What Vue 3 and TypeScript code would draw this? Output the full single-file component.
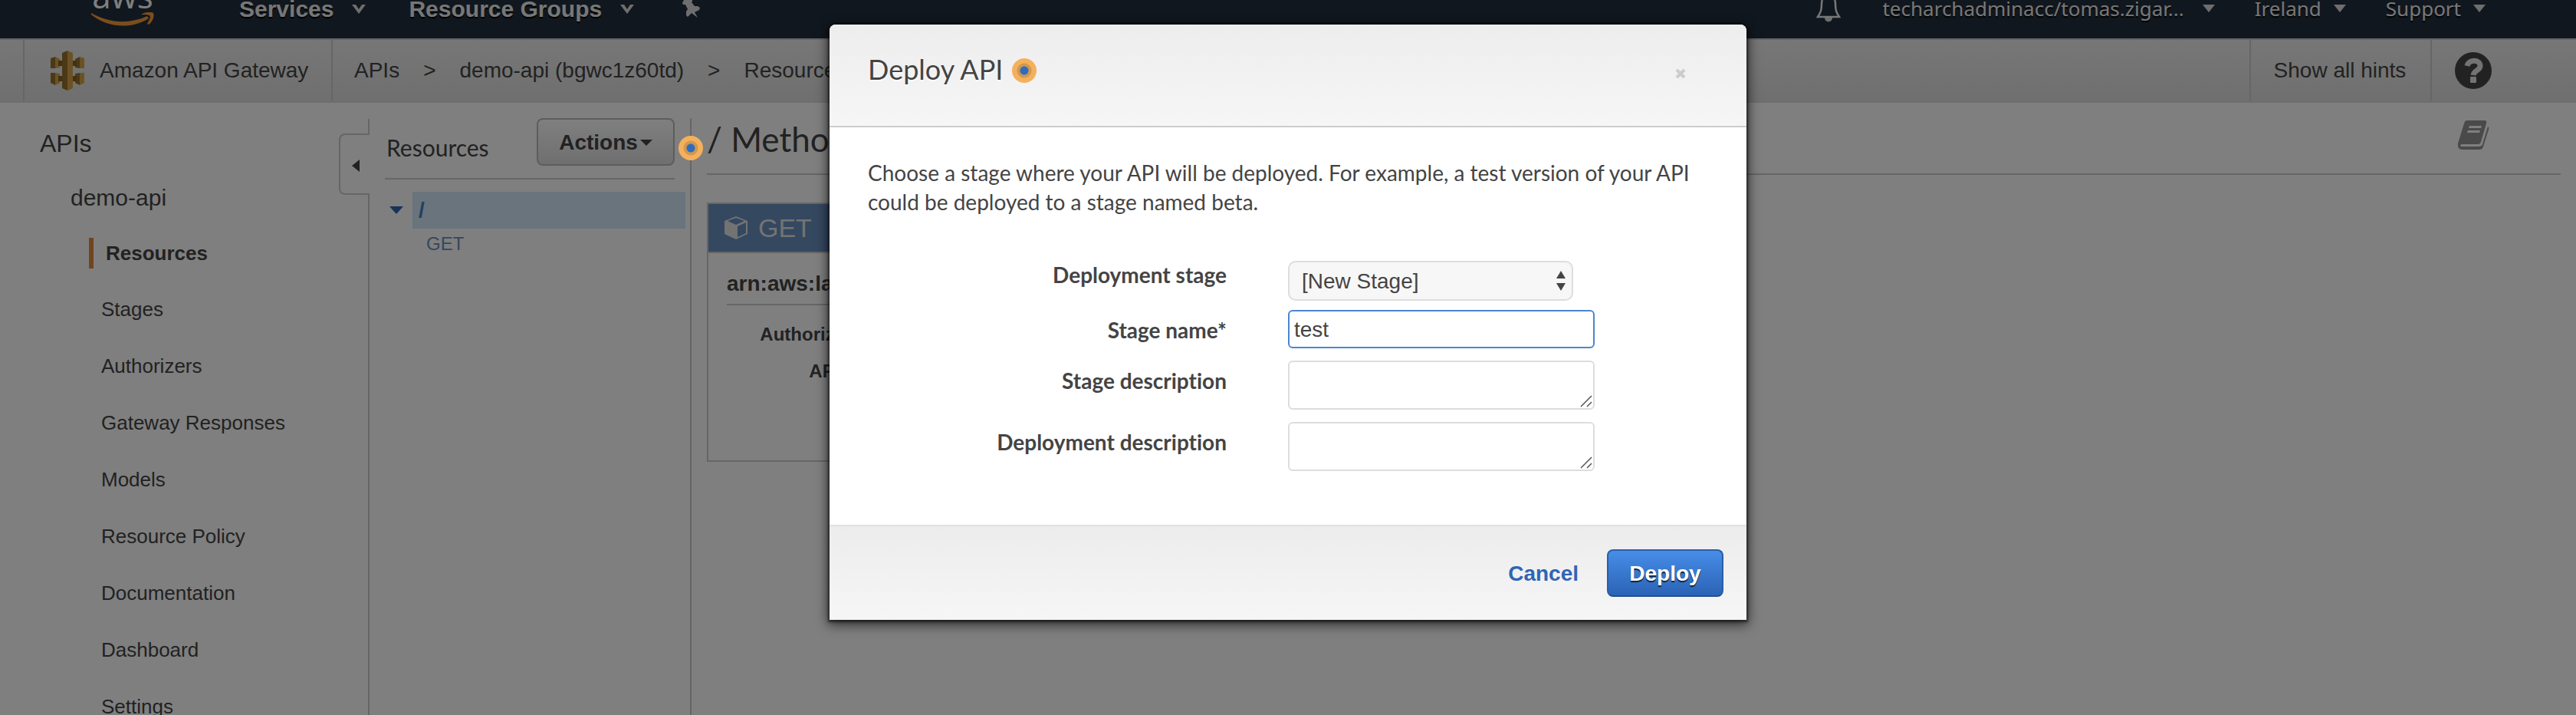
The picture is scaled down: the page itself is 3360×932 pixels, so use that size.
<script setup lang="ts">
import { ref } from 'vue'

const sections = ['Resources', 'Stages', 'Authorizers', 'Gateway Responses', 'Models', 'Resource Policy', 'Documentation', 'Dashboard', 'Settings']
const active = 'Resources'
const stage = ref('new')
const stageName = ref('test')
const stageDescription = ref('')
const deploymentDescription = ref('')
</script>

<template>
  <div class="page">
    <header class="nav">
      <a href="#" class="aws" aria-label="aws">
        <span class="aws-word">aws</span>
        <svg class="smile" width="84" height="20" viewBox="0 0 84 20"><path d="M1 1C24 14 50 16 74 5L76 8C56 21 24 22 1 3Z" /><path d="M66 3C72-1 80-1 82 1C84 5 81 12 76 16L74 15C77 10 79 6 77 4C75 3 70 3 66 3Z" /></svg>
      </a>
      <button class="nav-item bold services">Services
        <svg width="18" height="12" viewBox="0 0 18 12"><path d="M0 0H5L9 6L13 0H18L9 12Z" /></svg>
      </button>
      <button class="nav-item bold groups">Resource Groups
        <svg width="18" height="12" viewBox="0 0 18 12"><path d="M0 0H5L9 6L13 0H18L9 12Z" /></svg>
      </button>
      <button class="nav-item pin" aria-label="Pin">
        <svg width="24" height="24" viewBox="0 0 24 24"><path d="M0 4L2 0H13V2L12 3L16 8H20L23 10L22 13L16 16L20 23L12 17L7 22L5 20V15L7 12L4 6H1Z" /></svg>
      </button>
      <span class="grow"></span>
      <button class="nav-item bell" aria-label="Notifications">
        <svg width="32" height="38" viewBox="0 0 32 38"><path d="M16 3C10 3 7 8 7 14C7 22 6 25 2 31H30C26 25 25 22 25 14C25 8 22 3 16 3Z" fill="none" stroke="#f0f0f0" stroke-width="2.5" /><path d="M11 32C11 39 21 39 21 32Z" /></svg>
      </button>
      <button class="nav-item thin account">techarchadminacc/tomas.zigar...
        <svg width="16" height="10" viewBox="0 0 16 10"><path d="M0 0H16L8 10Z" /></svg>
      </button>
      <button class="nav-item thin region">Ireland
        <svg width="16" height="10" viewBox="0 0 16 10"><path d="M0 0H16L8 10Z" /></svg>
      </button>
      <button class="nav-item thin region">Support
        <svg width="16" height="10" viewBox="0 0 16 10"><path d="M0 0H16L8 10Z" /></svg>
      </button>
    </header>

    <div class="crumbs">
      <a href="#" class="service">
        <svg width="44" height="52" viewBox="0 0 44 52">
          <path d="M0 10L6 8V23H0ZM0 29H6V45L0 42ZM38 8L32 11V22L38 23ZM38 29L32 30V42L38 45Z" fill="#97702c" />
          <path d="M6 8L12 11V22L6 23ZM6 29L12 30V42L6 45ZM38 8L44 10V23H38ZM38 29H44V42L38 45Z" fill="#d6a448" />
          <path d="M10 13H34V20H10ZM10 33H34V40H10Z" fill="#86611f" />
          <path d="M22 0L15 3V49L22 52Z" fill="#97702c" />
          <path d="M22 0L29 3V49L22 52Z" fill="#d6a448" />
        </svg>
        Amazon API Gateway
      </a>
      <nav class="trail">
        <a href="#">APIs</a><span>&gt;</span><a href="#">demo-api (bgwc1z60td)</a><span>&gt;</span><a href="#">Resources</a>
      </nav>
      <button class="hints">Show all hints</button>
      <button class="help" aria-label="Help">
        <svg width="48" height="48" viewBox="0 0 48 48"><circle cx="24" cy="24" r="24" fill="#444" /><path d="M16 18C18 9 33 9 33 18C33 24 25 23 24 30" fill="none" stroke="#e6e6e6" stroke-width="7" /><rect x="20" y="32" width="8" height="8" rx="1" fill="#e6e6e6" /></svg>
      </button>
    </div>

    <div class="main">
      <aside class="side">
        <h2>APIs</h2>
        <h3>demo-api</h3>
        <ul>
          <li v-for="s in sections" :key="s" :class="{ active: s === active }"><a href="#">{{ s }}</a></li>
        </ul>
      </aside>
      <div class="rail">
        <span class="rail-top"></span>
        <button class="collapse" aria-label="Collapse">
          <svg width="10" height="16" viewBox="0 0 10 16"><path d="M10 0V16L0 8Z" fill="#444" /></svg>
        </button>
        <span class="rail-line"></span>
      </div>

      <section class="tree">
        <div class="tree-head">
          <h2>Resources</h2>
          <button class="actions">Actions<svg width="16" height="8" viewBox="0 0 16 8"><path d="M0 0H16L8 8Z" fill="#444" /></svg></button>
        </div>
        <div class="root">
          <svg width="18" height="10" viewBox="0 0 18 10"><path d="M0 0H18L9 10Z" fill="#2e66b4" /></svg>
          <a href="#">/</a>
        </div>
        <a href="#" class="leaf">GET</a>
        <span class="dot tree-dot"></span>
      </section>

      <section class="detail">
        <div class="detail-head">
          <h1>/ Method Execution</h1>
          <button class="book" aria-label="Documentation">
            <svg width="42" height="38" viewBox="0 0 42 38"><path fill-rule="evenodd" d="M13 0H36Q39 0 38 4L31 28Q30 31 27 31H6Q3 32 5 34H28Q32 34 33 31L40 8Q42 9 41 12L34 34Q33 38 29 38H6Q0 37 1 30L9 4Q10 0 13 0ZM16 7L15 10H31L32 7ZM14 13L13 16H29L30 13Z" fill="#959595" /></svg>
          </button>
        </div>
        <article class="card">
          <h2>
            <svg width="30" height="30" viewBox="0 0 30 30"><path d="M15 0L30 6V23L15 30L0 23V6Z" fill="#e6e6e6" /><path d="M15 2L26 6L15 11L4 6ZM17 13L28 8V22L17 27Z" fill="#6890c0" /></svg>
            GET
          </h2>
          <div class="card-body">
            <h3>arn:aws:lambda</h3>
            <p>Authorization</p>
            <p>API Key</p>
          </div>
        </article>
      </section>
    </div>

    <div class="overlay">
      <form class="modal" role="dialog" aria-labelledby="title" @submit.prevent>
        <header class="modal-head">
          <h2 id="title">Deploy API</h2>
          <span class="dot"></span>
          <button type="button" class="close" aria-label="Close"><svg width="14" height="14" viewBox="0 0 14 14"><path d="M2 2L12 12M12 2L2 12" stroke="#ccc" stroke-width="4" /></svg></button>
        </header>
        <div class="modal-body">
          <p>Choose a stage where your API will be deployed. For example, a test version of your API could be deployed to a stage named beta.</p>
          <div class="fields">
            <label for="stage" class="first">Deployment stage</label>
            <div class="select-wrap">
              <select id="stage" v-model="stage"><option value="new">[New Stage]</option></select>
              <svg width="14" height="26" viewBox="0 0 14 26"><path d="M7 0L13 10H1ZM1 16H13L7 26Z" fill="#444" /></svg>
            </div>
            <label for="name">Stage name*</label>
            <input id="name" v-model="stageName" type="text" />
            <label for="sdesc">Stage description</label>
            <div class="area">
              <textarea id="sdesc" v-model="stageDescription"></textarea>
              <svg width="16" height="16" viewBox="0 0 16 16"><path d="M1 15L15 1M9 15L15 9" stroke="#555" stroke-width="1.5" /></svg>
            </div>
            <label for="ddesc">Deployment description</label>
            <div class="area">
              <textarea id="ddesc" v-model="deploymentDescription"></textarea>
              <svg width="16" height="16" viewBox="0 0 16 16"><path d="M1 15L15 1M9 15L15 9" stroke="#555" stroke-width="1.5" /></svg>
            </div>
          </div>
        </div>
        <footer class="modal-foot">
          <button type="button" class="cancel">Cancel</button>
          <button type="submit" class="deploy">Deploy</button>
        </footer>
      </form>
    </div>
  </div>
</template>

<style>
body { margin: 0; }
</style>

<style scoped>
* { box-sizing: border-box; }
h1, h2, h3, p, ul { margin: 0; padding: 0; font-weight: 400; }
ul { list-style: none; }
a { color: inherit; text-decoration: none; }
button { font: inherit; color: inherit; background: none; border: 0; padding: 0; margin: 0; }
svg { display: block; flex: none; }
.page {
  position: relative;
  display: flex;
  flex-direction: column;
  height: 100vh;
  overflow: hidden;
  background: #fff;
  color: #444;
  font: 28px/36px "Liberation Sans", Arial, sans-serif;
}
.grow { flex: 1; }

.nav { display: flex; align-items: flex-start; height: 50px; flex: none; background: #232f3e; color: #eee; padding: 0 118px; overflow: hidden; }
.nav svg { fill: #ddd; }
.aws { display: flex; flex-direction: column; align-items: center; width: 84px; margin-top: -28px; }
.aws-word { font: 44px/44px "Open Sans", sans-serif; color: #fff; }
.nav .smile { fill: #f79a3a; }
.nav-item { display: flex; align-items: center; white-space: nowrap; text-shadow: 0 2px 1px #000; }
.bold { font-weight: 700; font-size: 30px; line-height: 36px; margin-top: -6px; gap: 24px; }
.services { margin-left: 110px; }
.groups { margin-left: 56px; }
.pin { margin-left: 63px; }
.bell { margin-top: -9px; }
.thin { font: 26px/36px "Noto Sans", sans-serif; gap: 24px; margin-top: -7px; }
.account { margin-left: 54px; }
.region { margin-left: 52px; gap: 16px; }

.crumbs { display: flex; height: 84px; flex: none; border-top: 2px solid #ccc; border-bottom: 2px solid #ddd; background: linear-gradient(#eee, #dfdfdf); padding-left: 30px; }
.service { display: flex; align-items: center; gap: 20px; width: 404px; padding-left: 34px; border: solid #ccc; border-width: 0 2px; }
.trail { display: flex; align-items: center; flex: 1; gap: 31px; padding-left: 28px; }
.hints { width: 236px; border-left: 2px solid #ccc; padding-right: 2px; }
.help { display: flex; align-items: center; width: 190px; padding-left: 30px; border-left: 2px solid #ccc; }

.main { display: flex; flex: 1; min-height: 0; }
.side { width: 442px; padding: 34px 0 0 52px; flex: none; }
.side h2 { font-size: 32px; line-height: 38px; }
.side h3 { font-size: 30px; line-height: 36px; margin: 34px 0 0 40px; }
.side ul { margin-top: 18px; }
.side li { display: flex; align-items: center; height: 74px; padding-left: 80px; font-size: 26px; line-height: 40px; }
.side li.active { height: 72px; padding-left: 64px; font-weight: 700; }
.side li.active a { border-left: 6px solid #e08a3a; padding-left: 16px; }
.rail { width: 40px; flex: none; display: flex; flex-direction: column; padding-top: 21px; }
.rail-top { height: 19px; border-right: 2px solid #ccc; }
.collapse { display: flex; align-items: center; height: 80px; padding: 4px 0 0 15px; border: 2px solid #ccc; border-right: 0; border-radius: 8px 0 0 8px; }
.rail-line { flex: 1; border-right: 2px solid #ccc; }

.tree { position: relative; width: 420px; flex: none; margin-top: 20px; padding-left: 20px; border-right: 2px solid #ccc; }
.tree-head { display: flex; justify-content: space-between; width: 378px; height: 80px; border-bottom: 2px solid #ccc; }
.tree-head h2 { font: 30px/36px Lato, sans-serif; margin: 20px 0 0 2px; }
.actions { display: flex; align-items: center; justify-content: center; gap: 3px; width: 180px; height: 62px; padding-top: 2px; border: 2px solid #bbb; border-radius: 8px; background: linear-gradient(#fff, #dfdfdf); font-weight: 700; }
.root { display: flex; align-items: center; gap: 12px; margin-top: 16px; padding: 0 6px; }
.root a { flex: 1; height: 48px; padding-left: 8px; background: #d2e8fb; color: #4a7fc4; font-weight: 700; line-height: 48px; }
.leaf { display: block; margin: 2px 0 0 54px; font-size: 24px; line-height: 36px; color: #6890c0; }
.dot { display: block; width: 32px; height: 32px; border-radius: 50%; background: radial-gradient(circle, #2e6cc0 5px, #d09850 6px 9px, #f5b05c 10px); }
.tree-dot { position: absolute; top: 23px; right: -17px; z-index: 1; }

.detail { flex: 1; padding: 20px 20px 0; }
.detail-head { display: flex; justify-content: space-between; height: 74px; border-bottom: 2px solid #ccc; }
.detail h1 { font: 44px/54px Lato, sans-serif; }
.book { align-self: flex-start; margin: 3px 93px 0 0; }
.card { width: 600px; height: 338px; margin-top: 36px; border: 2px solid #ccc; }
.card h2 { display: flex; align-items: center; gap: 14px; height: 64px; padding-left: 21px; border-bottom: 2px solid #ccc; background: #6890c0; color: #e6e6e6; font-size: 34px; }
.card-body { padding: 26px 24px; }
.card h3 { height: 42px; font-size: 28px; font-weight: 700; border-bottom: 2px solid #ccc; line-height: 28px; }
.card p { width: 198px; font-size: 24px; line-height: 48px; font-weight: 700; text-align: right; }
.card h3 + p { margin-top: 14px; }

.overlay { position: absolute; inset: 0; display: flex; justify-content: center; align-items: flex-start; padding-top: 32px; background: rgba(0, 0, 0, .5); }
.modal { width: 1196px; background: #fff; border-radius: 8px 8px 0 0; box-shadow: 0 4px 16px 2px rgba(0, 0, 0, .65), 0 1px 3px 2px rgba(0, 0, 0, .5); font-family: Lato, sans-serif; font-variant-ligatures: none; }
.modal-head { display: flex; align-items: center; gap: 12px; height: 134px; padding: 0 79px 12px 50px; border-bottom: 2px solid #ccc; border-radius: 8px 8px 0 0; background: linear-gradient(#ededed, #f6f6f6); }
.modal-head h2 { font-size: 36px; line-height: 44px; padding-bottom: 4px; text-shadow: 0 2px 0 #fff; }
.close { margin: 8px 0 0 auto; }
.modal-body { padding: 40px 50px 70px; }
.modal-body p { line-height: 38px; }
.fields { display: grid; grid-template-columns: 468px 400px; column-gap: 80px; row-gap: 16px; margin-top: 58px; }
.fields label { font-weight: 700; text-align: right; line-height: 36px; padding-top: 8px; }
.fields label.first { padding-top: 0; }
.select-wrap { position: relative; width: 372px; height: 52px; margin-bottom: -4px; }
.select-wrap svg { position: absolute; right: 9px; top: 13px; pointer-events: none; }
select, input, textarea { display: block; width: 100%; margin: 0; color: #444; font: 28px/36px "Liberation Sans", Arial, sans-serif; border: 2px solid #ddd; border-radius: 6px; background: #fff; outline: 0; }
select { appearance: none; height: 52px; padding: 2px 16px 0; border-radius: 10px; background: #f7f7f7; }
input { height: 50px; padding: 2px 6px 0; border-color: #4d86cc; }
.area { position: relative; height: 64px; }
.area svg { position: absolute; right: 3px; bottom: 3px; pointer-events: none; }
textarea { height: 64px; resize: none; padding: 4px 6px; }
.modal-foot { display: flex; justify-content: flex-end; align-items: center; gap: 37px; height: 124px; padding-right: 30px; border-top: 2px solid #e2e2e2; background: linear-gradient(#ececec, #f6f6f6); font: 700 28px/36px "Liberation Sans", Arial, sans-serif; }
.cancel { padding-top: 2px; color: #2e66b4; }
.deploy { width: 152px; height: 62px; padding-top: 2px; border: 2px solid #2a5fa8; border-bottom-color: #23508e; border-radius: 8px; background: linear-gradient(#478de8, #2b63b5); color: #fff; text-shadow: 0 2px 1px rgba(0, 0, 0, .7); }
</style>
